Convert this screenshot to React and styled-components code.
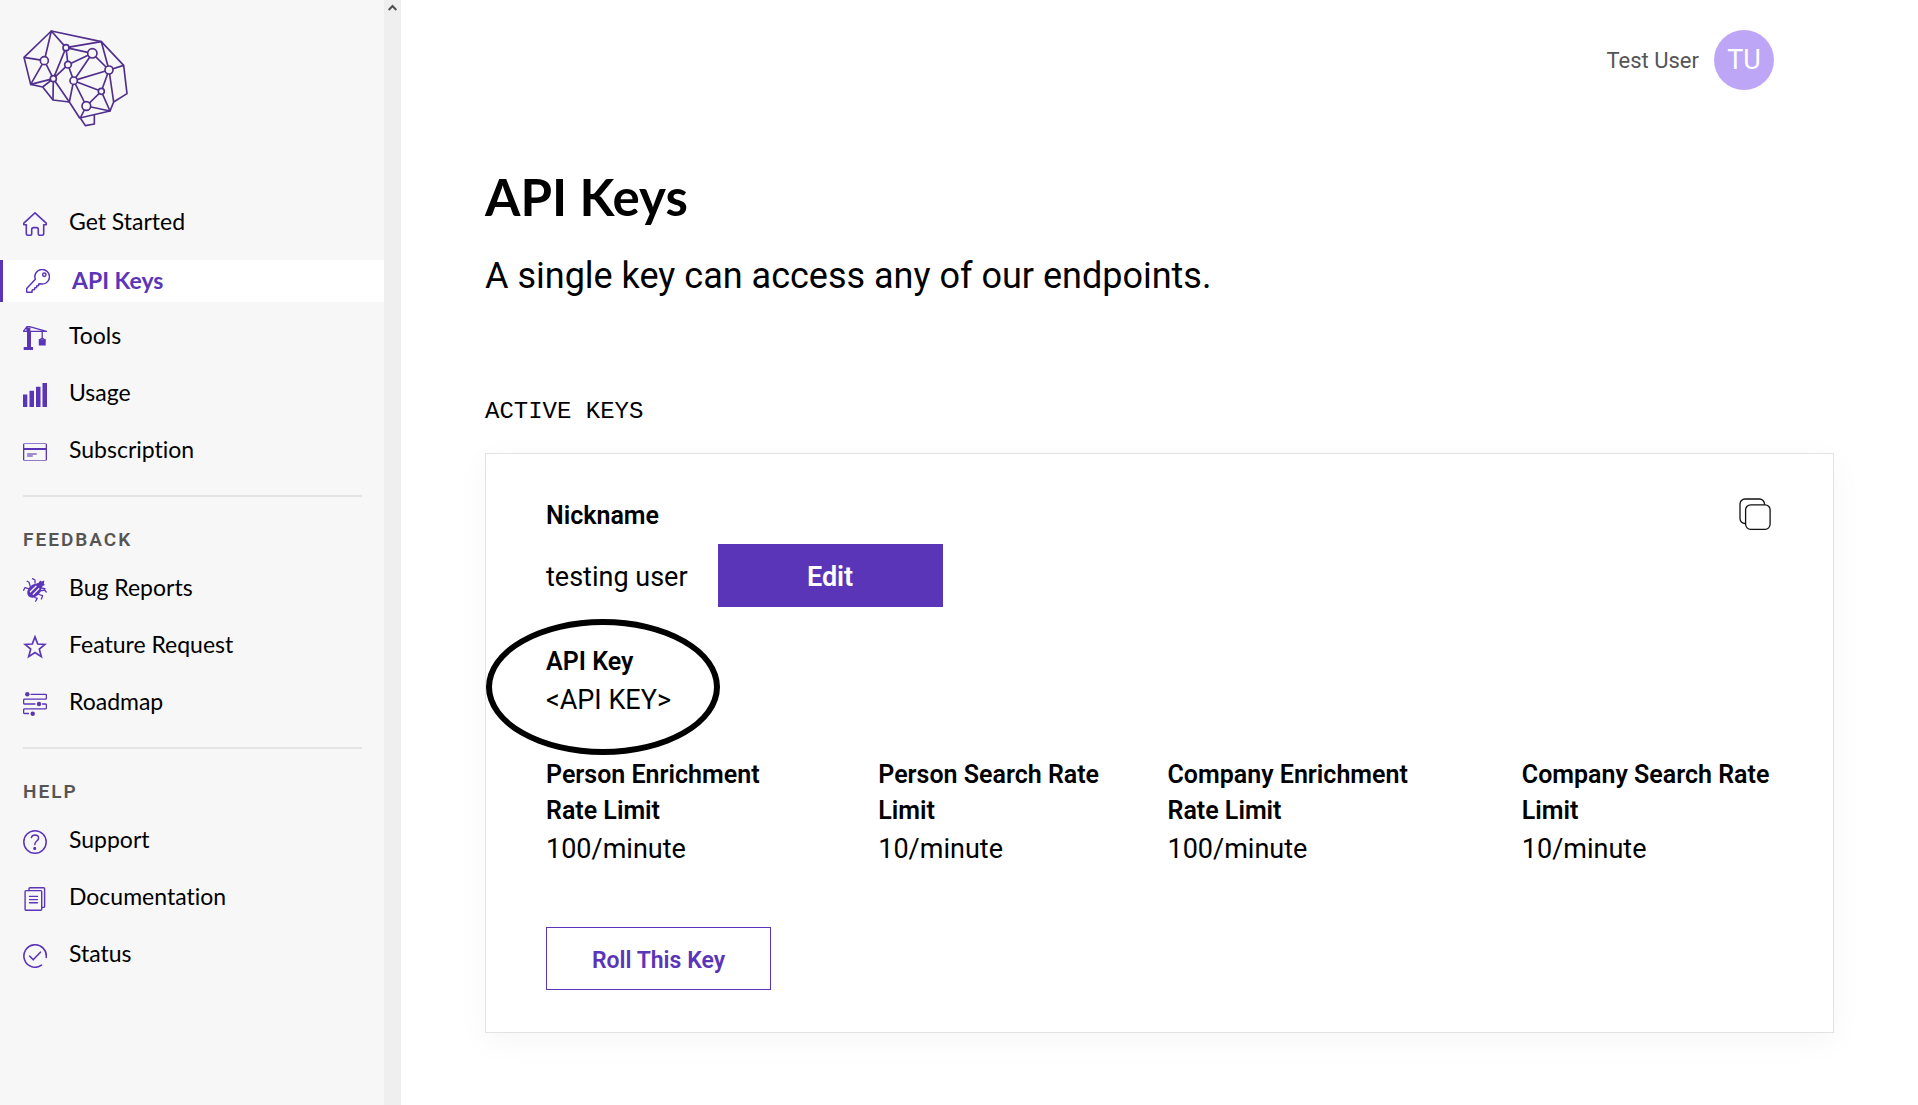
import React from 'react';
import styled, { createGlobalStyle } from 'styled-components';

const purple = '#5b35b8';
const navFont = 'Lato, "Open Sans", sans-serif';
const bodyFont = 'Roboto, "Liberation Sans", sans-serif';

const GlobalStyle = createGlobalStyle`
  *, *::before, *::after { box-sizing: border-box; }
  body { margin: 0; background: #fff; color: #000; font-family: ${bodyFont}; }
`;

const Page = styled.div`
  display: flex;
  min-height: 100vh;
`;

const Sidebar = styled.aside`
  flex: 0 0 384px;
  padding-top: 29px;
  background: #f7f7f7;
  font-family: ${navFont};
  font-variant-ligatures: none;
`;

const ScrollTrack = styled.div`
  flex: 0 0 17px;
  display: flex;
  justify-content: center;
  align-items: flex-start;
  padding-top: 4px;
  background: #efefef;
`;

const LogoLink = styled.a`
  display: block;
  height: 99px;
  margin: 0 23px 75px;
`;

const NavList = styled.ul`
  display: flex;
  flex-direction: column;
  gap: 15px;
  margin: 0;
  padding: 0;
  list-style: none;
`;

const NavLink = styled.a`
  display: flex;
  align-items: center;
  gap: 22px;
  height: 42px;
  padding-left: 23px;
  border-left: ${p => (p.$active ? `3px solid ${purple}` : '0')};
  background: ${p => (p.$active ? '#fff' : 'transparent')};
  color: ${p => (p.$active ? purple : '#000')};
  font-size: 23px;
  font-weight: ${p => (p.$active ? 700 : 400)};
  line-height: 28px;
  text-decoration: none;
`;

const NavLabel = styled.span`
  padding-bottom: ${p => (p.$active ? '2px' : '7px')};
`;

const Divider = styled.hr`
  height: 2px;
  margin: 22px 22px 31px 23px;
  border: 0;
  background: #e4e4e4;
`;

const NavHeading = styled.h2`
  margin: 0 23px 17px;
  color: #555;
  font-family: ${bodyFont};
  font-size: 19px;
  font-weight: 600;
  line-height: 24px;
  letter-spacing: 2px;
  text-transform: uppercase;
`;

const Main = styled.main`
  flex: 1;
  min-width: 0;
  padding: 30px 84px 60px;
`;

const UserBar = styled.header`
  display: flex;
  justify-content: flex-end;
  align-items: center;
  gap: 15px;
  margin: 0 60px 77px 0;
  color: #555;
  font-size: 22px;
`;

const Avatar = styled.span`
  display: flex;
  align-items: center;
  justify-content: center;
  width: 60px;
  height: 60px;
  border-radius: 50%;
  background: #bea6f7;
  color: #fff;
  font-size: 27px;
`;

const Title = styled.h1`
  margin: 0;
  font-family: ${navFont};
  font-size: 51px;
  font-weight: 700;
  line-height: 60px;
`;

const Subtitle = styled.p`
  margin: 27px 0 100px;
  font-size: 36px;
  line-height: 44px;
`;

const SectionLabel = styled.h2`
  margin: 0 0 27px;
  font-family: "Liberation Mono", monospace;
  font-size: 24px;
  font-weight: 400;
  line-height: 28px;
  text-transform: uppercase;
`;

const Card = styled.section`
  padding: 44px 60px 42px;
  border: 1px solid #e3e3e3;
  box-shadow: 0 8px 32px rgba(0, 0, 0, 0.04);
`;

const CardTop = styled.div`
  display: flex;
  justify-content: space-between;
  align-items: flex-start;
`;

const FieldLabel = styled.h3`
  margin: 0;
  font-size: 25px;
  font-weight: 600;
  line-height: 36px;
`;

const FieldValue = styled.p`
  margin: 0;
  font-size: 27px;
  line-height: 40px;
`;

const NicknameRow = styled.div`
  display: flex;
  align-items: center;
  gap: 30px;
  margin: 10px 0 37px;
`;

const Nickname = styled(FieldValue)`
  padding-top: 3px;
`;

const Button = styled.button`
  width: 225px;
  height: 63px;
  padding: 3px 0 0;
  border: 1px solid ${purple};
  background: ${p => (p.$primary ? purple : '#fff')};
  color: ${p => (p.$primary ? '#fff' : purple)};
  font-family: ${bodyFont};
  font-size: ${p => (p.$primary ? '27px' : '23px')};
  font-weight: 600;
  cursor: pointer;
`;

const CopyButton = styled.button`
  padding: 0;
  border: 0;
  background: none;
  cursor: pointer;
`;

const KeyField = styled.div`
  position: relative;
  width: fit-content;
  margin-bottom: 37px;
`;

const Highlight = styled.span`
  position: absolute;
  top: -25px;
  left: -60px;
  width: 234px;
  height: 136px;
  border: 6px solid #000;
  border-radius: 50%;
  pointer-events: none;
`;

const Limits = styled.div`
  display: grid;
  grid-template-columns: 332fr 289fr 354fr 251fr;
  margin-bottom: 58px;
`;

const Limit = styled.div`
  max-width: 270px;
`;

const Svg = styled.svg`
  display: block;
  flex: none;
`;

const Line = ({ children, w = 1.6 }) => (
  <Svg width="24" height="24" viewBox="0 0 24 24" fill="none" stroke={purple} strokeWidth={w}
    strokeLinecap="round" strokeLinejoin="round" aria-hidden="true">{children}</Svg>
);

const icons = {
  home: <Line><path d="M12 .8 23.2 11.2V12.8H20.7V21.5Q20.7 23.2 19 23.2H16.5Q15.3 23.2 15.3 22V17.4Q15.3 15.6 13.5 15.6H10.5Q8.7 15.6 8.7 17.4V22Q8.7 23.2 7.5 23.2H5Q3.3 23.2 3.3 21.5V12.8H.8V11.2Z" /></Line>,
  key: <Line w={1.5}><path d="M9.3 10.2A7.3 7.3 0 1 1 14.2 14.8L12.6 15V16.6L10.6 17V18.6L8.6 19V20.4L6.8 20.8 6 21.6V23.3H1.2Q.7 23.3.7 22.6V19.4Z" /><circle cx="18.3" cy="5.7" r="1.7" /></Line>,
  crane: (
    <Line w={1.3}>
      <path d="M.4 5.3 4 .6H6.5L23.5 5.3H.4M4 1V5M19.2 5.3V12L16.5 14M19.2 12 22 14" />
      <path d="M4 1.5H7.4V5H8V21H10V24H.7V21H4ZM15.8 13.3H22.7V19.4H15.8Z" fill={purple} stroke="none" />
    </Line>
  ),
  bars: <Line><path d="M0 11.5H4.3V24H0ZM6.5 7.7H11V24H6.5ZM13 3.8H17.5V24H13ZM19.5 0H24V24H19.5Z" fill={purple} stroke="none" /></Line>,
  card: (
    <Line w={1.2}>
      <rect x=".6" y="3.5" width="22.8" height="17" rx="1" opacity=".65" />
      <path d="M.6 4.5V19.5M23.4 4.5V19.5" />
      <path d="M.5 9H23.5" strokeWidth="2.2" />
      <path d="M4.8 14H13M4.8 16H9" strokeWidth="2" opacity=".55" />
    </Line>
  ),
  bug: (
    <Line w={1.3}>
      <path d="M9.5.7 12 2V5M4.2 3.2 6 4.2 7.2 8.2M.6 12.2 2 9.6 5.5 10.6M17.5 10 22 10.6M17.6 12.8 21.6 12 23.2 14M16 16.5 19.6 17.6 18.4 21M11.8 19.5 14.2 20.4 12.6 23.2" />
      <ellipse cx="11.2" cy="12.7" rx="5.9" ry="8" transform="rotate(45 11.2 12.7)" fill={purple} stroke="none" />
      <path d="M12.4 6.2 16 4.4 17 2.4 18.6 3.4 21.4 2.6 20.8 5.4 21.8 7 19.6 8 17.8 11.6Z" fill={purple} stroke="none" />
      <path d="M7.4 13.8 13 8.2M10.2 16.4 15.8 10.8" stroke="#f7f7f7" />
    </Line>
  ),
  star: <Line w={1.7}><path strokeLinejoin="miter" d="M12 1.9 14.7 9 22 9.4 16.3 14.1 18.3 21.6 12 17.5 5.7 21.6 7.7 14.1 2 9.4 9.3 9Z" /></Line>,
  roadmap: (
    <Line w={1.3}>
      <path d="M8 2.3H22.3Q23.4 2.3 23.4 3.4V6Q23.4 7.1 22.3 7.1H1.7Q.6 7.1.6 8.2V10.9Q.6 12 1.7 12H12M19.5 12H22.3Q23.4 12 23.4 13.1V15.7Q23.4 16.8 22.3 16.8H1.7Q.6 16.8.6 17.9V20.4Q.6 21.5 1.7 21.5H5.5" />
      <g fill={purple} stroke="none"><circle cx="4.3" cy="2.3" r="2.2" /><circle cx="16" cy="12" r="2.2" /><circle cx="9.7" cy="21.7" r="2.2" /></g>
    </Line>
  ),
  help: <Line w={1.5}><circle cx="12" cy="12" r="11.2" /><path d="M8.4 7.6Q9 4.9 12 4.9 15.6 5 15.6 8 15.6 9.6 13.8 11 12 12.4 11.8 14.6" /><circle cx="11.7" cy="18.4" r=".8" fill={purple} /></Line>,
  docs: <Line w={1.4}><rect x="2.1" y="3.6" width="16.6" height="19.6" rx="1" /><path d="M6 3.5V1.7Q6 .7 7 .7H20.6Q21.6.7 21.6 1.7V19.4Q21.6 20.4 20.6 20.4H19M6.5 9.4H14.5M6.5 12.6H14.5M6.5 15.8H14.5" /></Line>,
  status: <Line w={1.6}><path d="M18.5 21.2A11.2 11.2 0 1 1 23.2 13.5M6.8 12.2 10.2 15.8 17.4 8.2" /></Line>,
};

const outline = '154,93 304,125 371,196 381,281 341,306 330,333 239,354 208,306 159,300 128,261 92,253 72,172';
const nodes = [
  [133, 182, 12], [198, 143, 9], [204, 194, 10], [160, 236, 9], [221, 242, 11],
  [277, 160, 14], [327, 210, 12], [304, 274, 9], [259, 318, 13],
];

const BrainLogo = () => (
  <Svg width="106" height="99" viewBox="69 87 318 297" fill="none" stroke="#512f8c" strokeWidth="5" strokeLinejoin="round" role="img" aria-label="Home">
    <polygon points={outline} />
    <path d="M241 354 256 377 283 372 283 345M72 172 133 182 154 93 198 143 304 125 327 210 371 196M92 253 133 182 160 236ZM128 261 160 236 159 300M208 306 160 236 198 143 277 160 204 194 198 143M160 236 204 194 221 242 277 160 327 210 221 242 208 306M221 242 304 274 327 210 341 306M221 242 259 318 304 274 330 333 259 318 241 354" />
    {nodes.map(([x, y, r]) => <circle key={`${x}-${y}`} cx={x} cy={y} r={r} fill="#f7f7f7" />)}
  </Svg>
);

const groups = [
  { items: [['Get Started', 'home'], ['API Keys', 'key', true], ['Tools', 'crane'], ['Usage', 'bars'], ['Subscription', 'card']] },
  { heading: 'Feedback', items: [['Bug Reports', 'bug'], ['Feature Request', 'star'], ['Roadmap', 'roadmap']] },
  { heading: 'Help', items: [['Support', 'help'], ['Documentation', 'docs'], ['Status', 'status']] },
];

const limits = [
  ['Person Enrichment Rate Limit', '100/minute'],
  ['Person Search Rate Limit', '10/minute'],
  ['Company Enrichment Rate Limit', '100/minute'],
  ['Company Search Rate Limit', '10/minute'],
];

export default function App() {
  return (
    <Page>
      <GlobalStyle />
      <Sidebar>
        <LogoLink href="#"><BrainLogo /></LogoLink>
        <nav>
          {groups.map(group => (
            <React.Fragment key={group.heading || 'main'}>
              {group.heading && <><Divider /><NavHeading>{group.heading}</NavHeading></>}
              <NavList>
                {group.items.map(([label, icon, active]) => (
                  <li key={label}>
                    <NavLink href="#" $active={active} aria-current={active ? 'page' : undefined}>
                      {icons[icon]}
                      <NavLabel $active={active}>{label}</NavLabel>
                    </NavLink>
                  </li>
                ))}
              </NavList>
            </React.Fragment>
          ))}
        </nav>
      </Sidebar>
      <ScrollTrack>
        <Svg width="9" height="8" viewBox="0 0 9 8" fill="none" stroke="#505050" strokeWidth="2" aria-hidden="true">
          <path d="M.7 6 4.5 2 8.3 6" />
        </Svg>
      </ScrollTrack>
      <Main>
        <UserBar>
          <span>Test User</span>
          <Avatar>TU</Avatar>
        </UserBar>
        <Title>API Keys</Title>
        <Subtitle>A single key can access any of our endpoints.</Subtitle>
        <SectionLabel>Active Keys</SectionLabel>
        <Card>
          <CardTop>
            <FieldLabel>Nickname</FieldLabel>
            <CopyButton aria-label="Copy key">
              <Svg width="34" height="33" viewBox="0 0 34 33" fill="#fff" stroke="#111" strokeWidth="1.3">
                <rect x="1" y="1" width="24.5" height="24.5" rx="5" />
                <rect x="6.6" y="6.8" width="24.5" height="24.5" rx="5" />
              </Svg>
            </CopyButton>
          </CardTop>
          <NicknameRow>
            <Nickname>testing user</Nickname>
            <Button $primary>Edit</Button>
          </NicknameRow>
          <KeyField>
            <FieldLabel>API Key</FieldLabel>
            <FieldValue>&lt;API KEY&gt;</FieldValue>
            <Highlight />
          </KeyField>
          <Limits>
            {limits.map(([label, value]) => (
              <Limit key={label}>
                <FieldLabel>{label}</FieldLabel>
                <FieldValue>{value}</FieldValue>
              </Limit>
            ))}
          </Limits>
          <Button>Roll This Key</Button>
        </Card>
      </Main>
    </Page>
  );
}
